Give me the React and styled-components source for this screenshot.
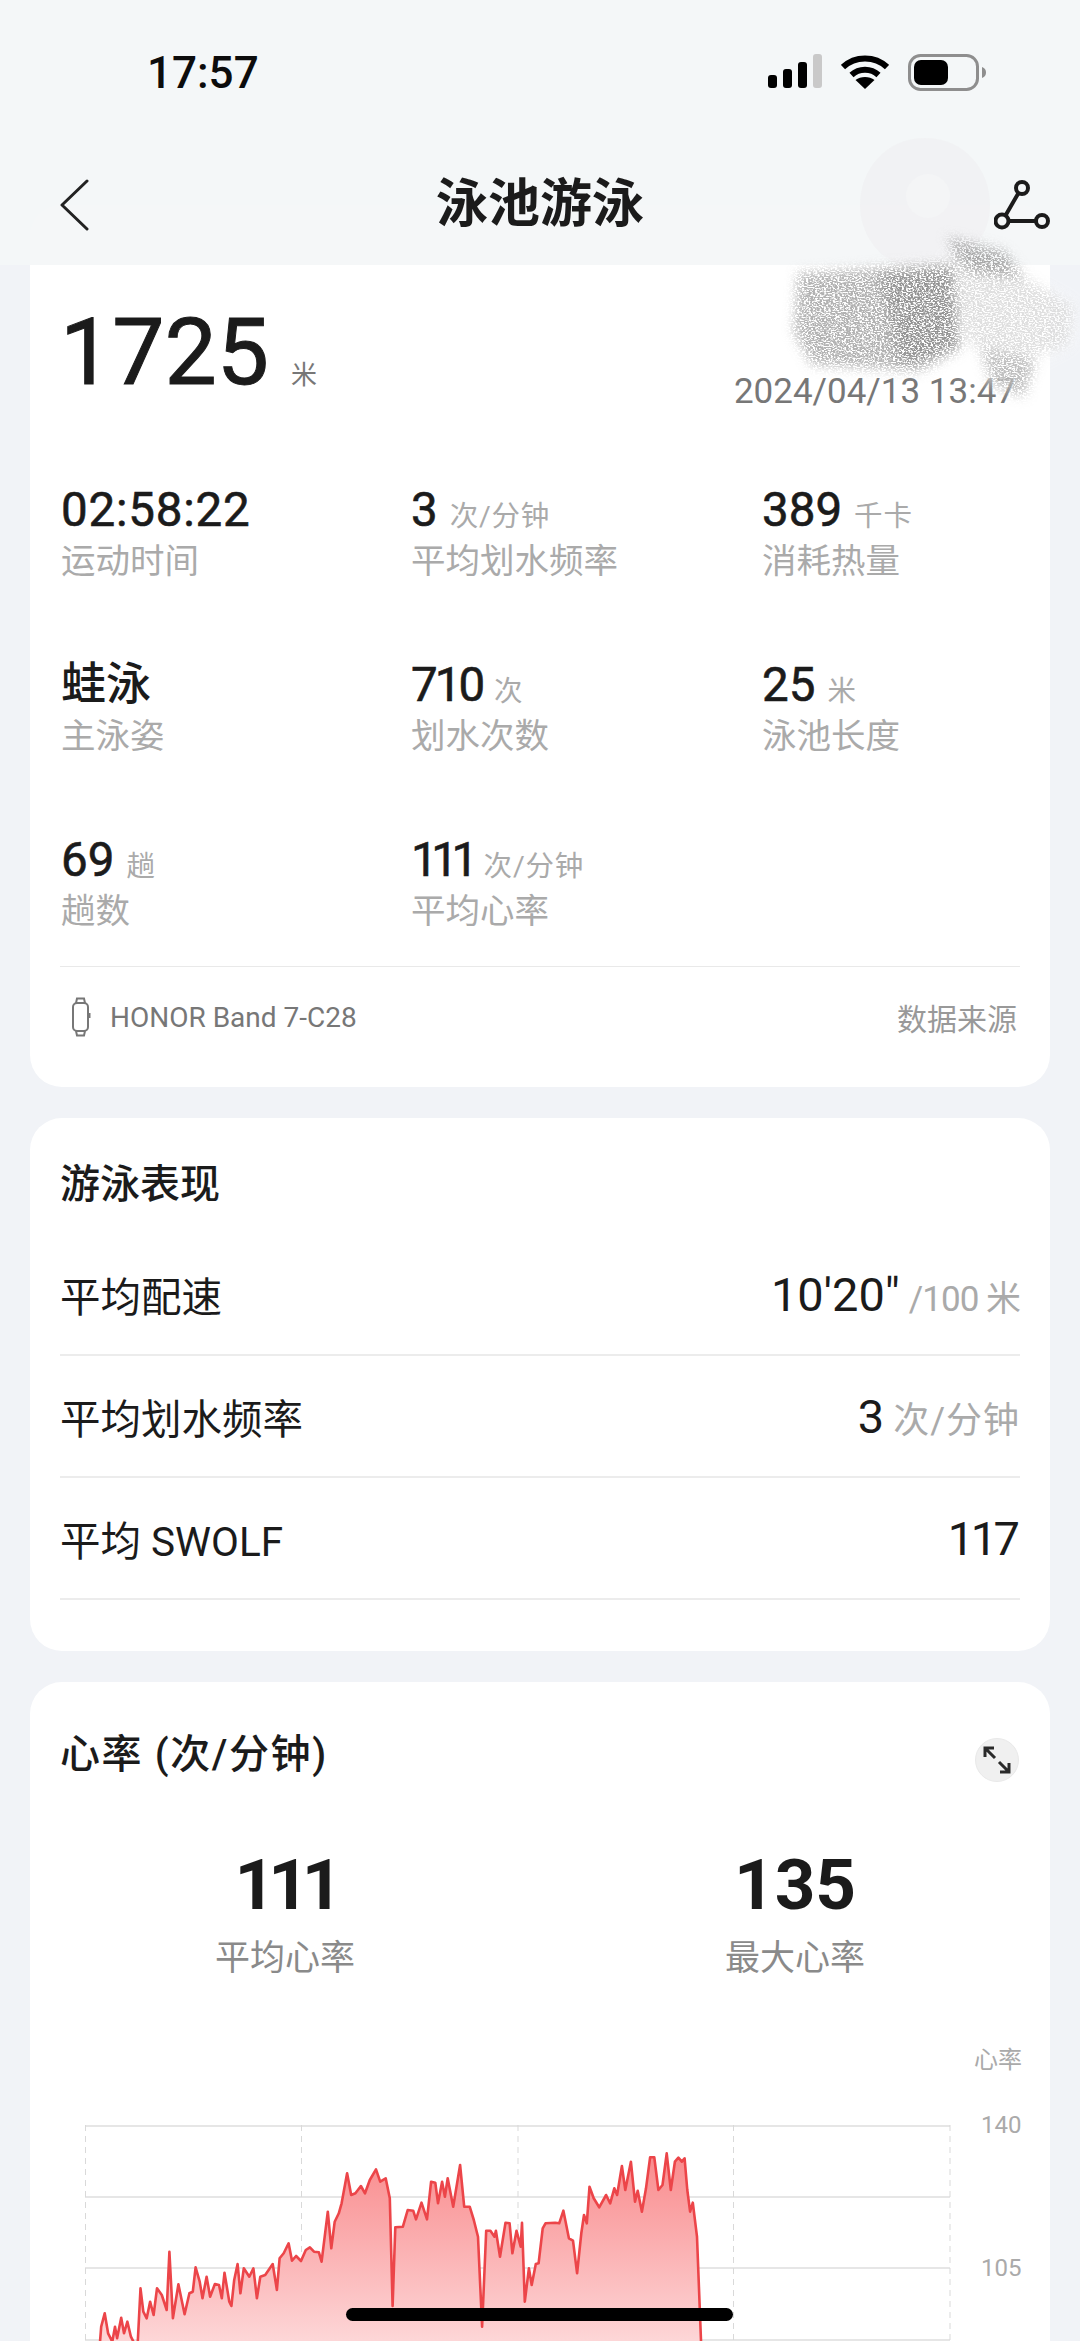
import React from "react";
import styled, { createGlobalStyle } from "styled-components";

const Global = createGlobalStyle`
  html, body { margin: 0; padding: 0; background: #f1f3f7; }
  html, body { width: 1080px; height: 2341px; overflow: hidden; }
  * { box-sizing: border-box; }
  body { font-family: Roboto, "Noto Sans CJK SC", sans-serif; color: #1c1c1c; }
`;

const Page = styled.div`
  position: relative;
  width: 1080px;
  height: 2341px;
  overflow: hidden;
  padding: 205px 30px 0;
  display: flex;
  flex-direction: column;
  gap: 31px;
`;

const TopOverlay = styled.header`
  position: absolute;
  top: 0;
  left: 0;
  right: 0;
  height: 265px;
  background: rgba(244, 246, 248, 0.93);
  z-index: 2;
`;

const StatusBar = styled.div`
  height: 146px;
  padding: 54px 92px 0 147px;
  display: flex;
  justify-content: space-between;
  align-items: flex-start;
`;

const Clock = styled.div`
  font-size: 44px;
  line-height: 38px;
  font-weight: 500;
  color: #0c0c0c;
`;

const StatusIcons = styled.div`
  display: flex;
  align-items: flex-start;
  gap: 19px;
`;

const NavBar = styled.div`
  position: relative;
  height: 90px;
  margin-top: 14px;
  display: flex;
  align-items: center;
  justify-content: space-between;
  padding: 0 30px 0 60px;
`;

const NavTitle = styled.h1`
  position: absolute;
  left: 0;
  right: 0;
  margin: 0;
  text-align: center;
  font-size: 52px;
  line-height: 60px;
  font-weight: 600;
  color: #1b1b1b;
`;

const Card = styled.section`
  background: #fff;
  border-radius: 32px;
  flex: none;
`;

const HeroCard = styled(Card)`
  height: 882px;
  padding: 102px 30px 20px;
`;

const HeroRow = styled.div`
  display: flex;
  align-items: flex-end;
  height: 92px;
  justify-content: space-between;
`;

const HeroValue = styled.div`
  display: flex;
  align-items: baseline;
  gap: 22px;
`;

const BigNumber = styled.span`
  font-size: 93px;
  line-height: 92px;
  color: #1b1b1b;
  -webkit-text-stroke: 1px #1b1b1b;
`;

const HeroUnit = styled.span`
  font-size: 26px;
  color: #777;
`;

const DateText = styled.span`
  font-size: 35px;
  line-height: 40px;
  margin: 0 4px -13px 0;
  color: #777;
`;

const StatsGrid = styled.div`
  margin-top: 88px;
  display: grid;
  grid-template-columns: 350px 351px 1fr;
  grid-auto-rows: 175px;
  height: 525px;
`;

const Stat = styled.div`
  display: flex;
  flex-direction: column;
  gap: 5px;
  padding-left: 1px;
`;

const StatValue = styled.div`
  height: 46px;
  display: flex;
  align-items: baseline;
  gap: 12px;
`;

const StatNumber = styled.span`
  font-size: 47.5px;
  line-height: 46px;
  color: #1b1b1b;
  -webkit-text-stroke: 0.6px #1b1b1b;
  letter-spacing: ${(p) => p.$track || 0}px;
`;

const StyleName = styled.span`
  font-size: 45px;
  line-height: 46px;
  font-weight: 500;
  color: #1b1b1b;
`;

const StatUnit = styled.span`
  font-size: 28.5px;
  letter-spacing: 0.8px;
  color: #aaa;
`;

const StatLabel = styled.div`
  font-size: 34.5px;
  line-height: 46px;
  color: #aaa;
`;

const DeviceRow = styled.div`
  margin-top: -46px;
  height: 101px;
  border-top: 1px solid #e9e9e9;
  display: flex;
  align-items: center;
  justify-content: space-between;
`;

const Device = styled.div`
  display: flex;
  align-items: center;
  gap: 19px;
  padding-left: 11px;
  font-size: 28px;
  color: #777;
`;

const SourceLink = styled.span`
  font-size: 30px;
  color: #999;
  margin-right: 3px;
`;

const PerfCard = styled(Card)`
  height: 533px;
  padding: 47px 30px 0;
`;

const SectionTitle = styled.h2`
  margin: 0;
  font-size: 40px;
  line-height: 40px;
  font-weight: 500;
  color: #1b1b1b;
  letter-spacing: ${(p) => p.$track || 0}px;
`;

const PerfList = styled.div`
  margin-top: 29px;
`;

const PerfRow = styled.div`
  height: 122px;
  border-bottom: 2px solid #ececec;
  display: flex;
  align-items: center;
  justify-content: space-between;
  font-size: 40.5px;
  color: #1b1b1b;
`;

const PerfValue = styled.div`
  display: flex;
  align-items: baseline;
  gap: 9px;
  font-size: 47px;
  letter-spacing: ${(p) => p.$track || 0}px;
  padding-right: ${(p) => -(p.$track || 0)}px;
`;

const PerfUnit = styled.span`
  font-size: ${(p) => p.$size || 36}px;
  letter-spacing: ${(p) => p.$spread ?? 1}px;
  color: #aaa;
`;

const HeartCard = styled(Card)`
  height: 800px;
  padding-top: 53px;
`;

const HeartHeader = styled.div`
  height: 40px;
  padding: 0 30px;
  display: flex;
  align-items: center;
  justify-content: space-between;
`;

const ExpandButton = styled.div`
  width: 44px;
  height: 44px;
  margin: 10px 1px 0 0;
  border-radius: 50%;
  background: #f0f0f0;
  border: 1px solid #e9e9e9;
  display: flex;
  align-items: center;
  justify-content: center;
`;

const Summary = styled.div`
  margin-top: 70px;
  display: grid;
  grid-template-columns: 1fr 1fr;
`;

const SummaryItem = styled.div`
  display: flex;
  flex-direction: column;
  align-items: center;
  gap: 12px;
`;

const SummaryNumber = styled.div`
  font-size: 71px;
  line-height: 80px;
  font-weight: 700;
  color: #1b1b1b;
  letter-spacing: ${(p) => p.$track || 0}px;
`;

const SummaryLabel = styled.div`
  font-size: 35px;
  line-height: 44px;
  color: #8a8a8a;
`;

const AxisTitle = styled.div`
  margin-top: 64px;
  padding-right: 28px;
  text-align: right;
  font-size: 24px;
  line-height: 30px;
  color: #aaa;
`;

const ChartRow = styled.div`
  margin-top: 50px;
  padding-left: 55px;
  display: flex;
`;

const AxisColumn = styled.div`
  margin: -18px 0 0 30px;
  display: flex;
  flex-direction: column;
`;

const AxisTick = styled.div`
  height: 143px;
  font-size: 24px;
  line-height: 36px;
  color: #aaa;
`;

const HomeBar = styled.div`
  position: absolute;
  left: 346px;
  top: 2308px;
  width: 387px;
  height: 13px;
  border-radius: 7px;
  background: #000;
  z-index: 3;
`;

const Smudge = styled.svg`
  position: absolute;
  left: 780px;
  top: 225px;
  z-index: 4;
`;

const Watermark = styled.svg`
  position: absolute;
  left: 850px;
  top: 130px;
  z-index: 3;
`;

const Chevron = () => (
  <svg width="30" height="52" viewBox="0 0 30 52" fill="none">
    <path d="M27 2 L2 26 L27 50" stroke="#222" strokeWidth="3" strokeLinecap="round" strokeLinejoin="round" />
  </svg>
);

const ShareIcon = () => (
  <svg width="56" height="50" viewBox="0 0 56 50" fill="none" stroke="#1b1b1b" strokeWidth="4">
    <circle cx="28" cy="8" r="6" />
    <circle cx="8" cy="41" r="6.5" />
    <circle cx="48" cy="41" r="6" />
    <path d="M24.5 13 L11.5 35.5 M14.5 41 H42" />
  </svg>
);

const SignalIcon = () => (
  <svg width="54" height="35" viewBox="0 0 54 35">
    <rect x="0" y="21" width="9" height="13" rx="3" fill="#000" />
    <rect x="15" y="15" width="9" height="19" rx="3" fill="#000" />
    <rect x="30" y="8" width="9" height="26" rx="3" fill="#000" />
    <rect x="45" y="0" width="9" height="34" rx="3" fill="#c9c9c9" />
  </svg>
);

const WifiIcon = () => (
  <svg width="48" height="36" viewBox="0 0 48 36" fill="none" stroke="#000" strokeWidth="6">
    <path d="M2 13 C14 1.5 34 1.5 46 13" />
    <path d="M10.5 21 C18 14 30 14 37.5 21" />
    <path d="M24 35 L14.5 26 C19.5 22 28.5 22 33.5 26 Z" fill="#000" stroke="none" />
  </svg>
);

const BatteryIcon = () => (
  <svg width="80" height="38" viewBox="0 0 80 38">
    <rect x="1.5" y="1.5" width="68" height="34" rx="11" fill="none" stroke="#8e8e8e" strokeWidth="3" />
    <rect x="6" y="6" width="34" height="25" rx="7" fill="#000" />
    <path d="M74 13 C77 14 78 16 78 18.5 C78 21 77 23 74 24 Z" fill="#8e8e8e" />
  </svg>
);

const BandIcon = () => (
  <svg width="20" height="40" viewBox="0 0 20 40" fill="none" stroke="#777" strokeWidth="2">
    <rect x="2" y="6" width="15" height="28" rx="4" />
    <path d="M5 6 L6 1.5 H13 L14 6 M5 34 L6 38.5 H13 L14 34" />
    <path d="M18.5 16 V21" />
  </svg>
);

const ExpandIcon = () => (
  <svg width="30" height="30" viewBox="0 0 30 30" fill="none" stroke="#2a2a2a" strokeWidth="3">
    <path d="M3 12 V3 H12 M3 3 L13 13 M27 18 V27 H18 M27 27 L17 17" />
  </svg>
);

const Z = [[145,1090],[147,1040],[152,1000],[157,1060],[163,1085],[167,1040],[170,1075],[176,1013],[180,1060],[185,1025],[190,1070],[195,1090],[200,1090],[204,925],[208,995],[213,1015],[218,965],[223,1005],[228,925],[235,945],[242,990],[246,815],[251,1015],[259,913],[268,1003],[275,940],[280,935],[284,862],[290,905],[294,955],[300,890],[305,950],[312,912],[318,915],[322,955],[326,878],[333,965],[336,978],[340,900],[345,852],[349,940],[354,865],[362,890],[368,865],[373,955],[378,890],[385,885],[396,852],[402,930],[406,835],[412,820],[419,790],[424,842],[430,828],[437,843],[444,810],[450,802],[456,815],[463,817],[467,845],[476,695],[481,805],[486,725],[492,700],[496,670],[504,580],[510,645],[516,640],[524,618],[530,640],[537,600],[546,568],[552,605],[560,595],[566,655],[570,978],[574,742],[585,740],[592,690],[600,692],[604,718],[612,668],[620,718],[626,605],[632,608],[636,670],[642,605],[646,650],[650,595],[658,680],[668,555],[674,680],[682,680],[688,720],[694,770],[700,1040],[706,752],[712,752],[718,770],[720,752],[726,830],[734,728],[740,730],[744,820],[750,752],[756,800],[758,728],[762,965],[768,865],[772,915],[778,852],[782,850],[788,745],[792,730],[806,728],[812,730],[818,692],[826,775],[832,782],[838,880],[844,760],[848,705],[852,730],[856,620],[862,655],[870,682],[880,645],[886,670],[892,625],[896,645],[903,558],[908,630],[916,545],[922,665],[926,632],[932,695],[938,625],[944,532],[950,532],[956,630],[962,615],[968,520],[974,630],[980,545],[985,533],[990,545],[994,535],[998,630],[1002,695],[1006,668],[1012,770],[1018,1090]];

const toChart = ([x, y]) => [(x / 1.452 - 85).toFixed(1), (1980 + y / 3 - 2125).toFixed(1)];
const line = Z.map(toChart).map((p) => p.join(",")).join(" ");

const HeartChart = () => (
  <svg width="866" height="240" viewBox="0 0 866 240" fill="none">
    <defs>
      <linearGradient id="hr" x1="0" y1="30" x2="0" y2="218" gradientUnits="userSpaceOnUse">
        <stop offset="0" stopColor="#f98b8d" />
        <stop offset="1" stopColor="#fdd7d8" />
      </linearGradient>
    </defs>
    <path d="M0 1 H865 M0 72 H865 M0 143 H865 M0 215 H865" stroke="#e6e6e6" strokeWidth="2" />
    <path d="M0.5 0 V240 M216.5 0 V240 M433 0 V240 M648.5 0 V240 M865 0 V240" stroke="#d9d9d9" strokeWidth="1" strokeDasharray="6 5" />
    <polygon points={line} fill="url(#hr)" />
    <polyline points={line} stroke="#ec4549" strokeWidth="2.6" strokeLinejoin="round" />
  </svg>
);

const SmudgeArt = () => (
  <Smudge width="300" height="190" viewBox="0 0 300 190">
    <defs>
      <filter id="soft" x="-20%" y="-20%" width="140%" height="140%">
        <feGaussianBlur stdDeviation="8" />
      </filter>
      <filter id="grain" x="-15%" y="-15%" width="130%" height="130%">
        <feGaussianBlur in="SourceGraphic" stdDeviation="6" result="shape" />
        <feTurbulence type="fractalNoise" baseFrequency="0.45 0.8" numOctaves="2" seed="23" result="noise" />
        <feColorMatrix in="noise" type="matrix" values="0 0 0 0 0.3  0 0 0 0 0.3  0 0 0 0 0.3  4 4 0 0 -3.3" result="dots" />
        <feComposite in="dots" in2="shape" operator="in" />
      </filter>
    </defs>
    <path d="M172 26 L240 50 L294 80 L292 118 L250 140 L236 165 L170 140 L155 60 Z" fill="#fff" filter="url(#soft)" opacity="0.88" />
    <path d="M20 52 L170 40 L180 125 L140 142 L30 138 L18 108 Z" fill="#fff" filter="url(#soft)" opacity="0.9" />
    <g filter="url(#grain)">
      <path d="M18 48 L172 38 L180 124 L140 146 L32 140 L14 108 Z" fill="#000" opacity="0.72" />
      <path d="M100 48 L172 44 L180 120 L120 144 Z" fill="#000" />
      <path d="M170 20 L228 42 L294 82 L288 120 L240 136 L190 120 L170 60 Z" fill="#000" opacity="0.3" />
      <path d="M166 12 L224 26 L244 52 L190 48 Z" fill="#000" opacity="0.75" />
      <path d="M200 124 L256 136 L244 172 L212 160 Z" fill="#000" opacity="0.6" />
    </g>
  </Smudge>
);

const stats = [
  { value: "02:58:22", track: 0.8, label: "运动时间" },
  { value: "3", unit: "次/分钟", label: "平均划水频率" },
  { value: "389", unit: "千卡", label: "消耗热量" },
  { name: "蛙泳", label: "主泳姿" },
  { value: "710", track: -3, unit: "次", label: "划水次数" },
  { value: "25", unit: "米", label: "泳池长度" },
  { value: "69", unit: "趟", label: "趟数" },
  { value: "111", track: -6.5, unit: "次/分钟", label: "平均心率" },
];

const perf = [
  { name: "平均配速", value: "10'20\"", unit: "/100 米", unitSize: 35, unitSpread: -1 },
  { name: "平均划水频率", value: "3", unit: "次/分钟" },
  { name: "平均 SWOLF", value: "117", track: -3.5 },
];

export default function App() {
  return (
    <>
      <Global />
      <Page>
        <TopOverlay>
          <StatusBar>
            <Clock>17:57</Clock>
            <StatusIcons>
              <SignalIcon />
              <WifiIcon />
              <BatteryIcon />
            </StatusIcons>
          </StatusBar>
          <NavBar>
            <Chevron />
            <NavTitle>泳池游泳</NavTitle>
            <ShareIcon />
          </NavBar>
        </TopOverlay>

        <HeroCard>
          <HeroRow>
            <HeroValue>
              <BigNumber>1725</BigNumber>
              <HeroUnit>米</HeroUnit>
            </HeroValue>
            <DateText>2024/04/13 13:47</DateText>
          </HeroRow>
          <StatsGrid>
            {stats.map((s) => (
              <Stat key={s.label}>
                <StatValue>
                  {s.name ? <StyleName>{s.name}</StyleName> : <StatNumber $track={s.track}>{s.value}</StatNumber>}
                  {s.unit && <StatUnit>{s.unit}</StatUnit>}
                </StatValue>
                <StatLabel>{s.label}</StatLabel>
              </Stat>
            ))}
          </StatsGrid>
          <DeviceRow>
            <Device>
              <BandIcon />
              HONOR Band 7-C28
            </Device>
            <SourceLink>数据来源</SourceLink>
          </DeviceRow>
        </HeroCard>

        <PerfCard>
          <SectionTitle>游泳表现</SectionTitle>
          <PerfList>
            {perf.map((p) => (
              <PerfRow key={p.name}>
                {p.name}
                <PerfValue $track={p.track}>
                  {p.value}
                  {p.unit && <PerfUnit $size={p.unitSize} $spread={p.unitSpread}>{p.unit}</PerfUnit>}
                </PerfValue>
              </PerfRow>
            ))}
          </PerfList>
        </PerfCard>

        <HeartCard>
          <HeartHeader>
            <SectionTitle $track={1.6}>心率 (次/分钟)</SectionTitle>
            <ExpandButton>
              <ExpandIcon />
            </ExpandButton>
          </HeartHeader>
          <Summary>
            <SummaryItem>
              <SummaryNumber $track={-7}>111</SummaryNumber>
              <SummaryLabel>平均心率</SummaryLabel>
            </SummaryItem>
            <SummaryItem>
              <SummaryNumber>135</SummaryNumber>
              <SummaryLabel>最大心率</SummaryLabel>
            </SummaryItem>
          </Summary>
          <AxisTitle>心率</AxisTitle>
          <ChartRow>
            <HeartChart />
            <AxisColumn>
              <AxisTick>140</AxisTick>
              <AxisTick>105</AxisTick>
            </AxisColumn>
          </ChartRow>
        </HeartCard>

        <Watermark width="150" height="140" viewBox="0 0 150 140">
          <path d="M75 8 C115 8 140 40 140 75 C140 105 120 130 95 138 L55 138 C30 130 10 105 10 75 C10 40 35 8 75 8 Z" fill="#eeeff0" opacity="0.55" />
          <circle cx="78" cy="66" r="22" fill="#f4f5f6" />
        </Watermark>
        <SmudgeArt />
        <HomeBar />
      </Page>
    </>
  );
}
